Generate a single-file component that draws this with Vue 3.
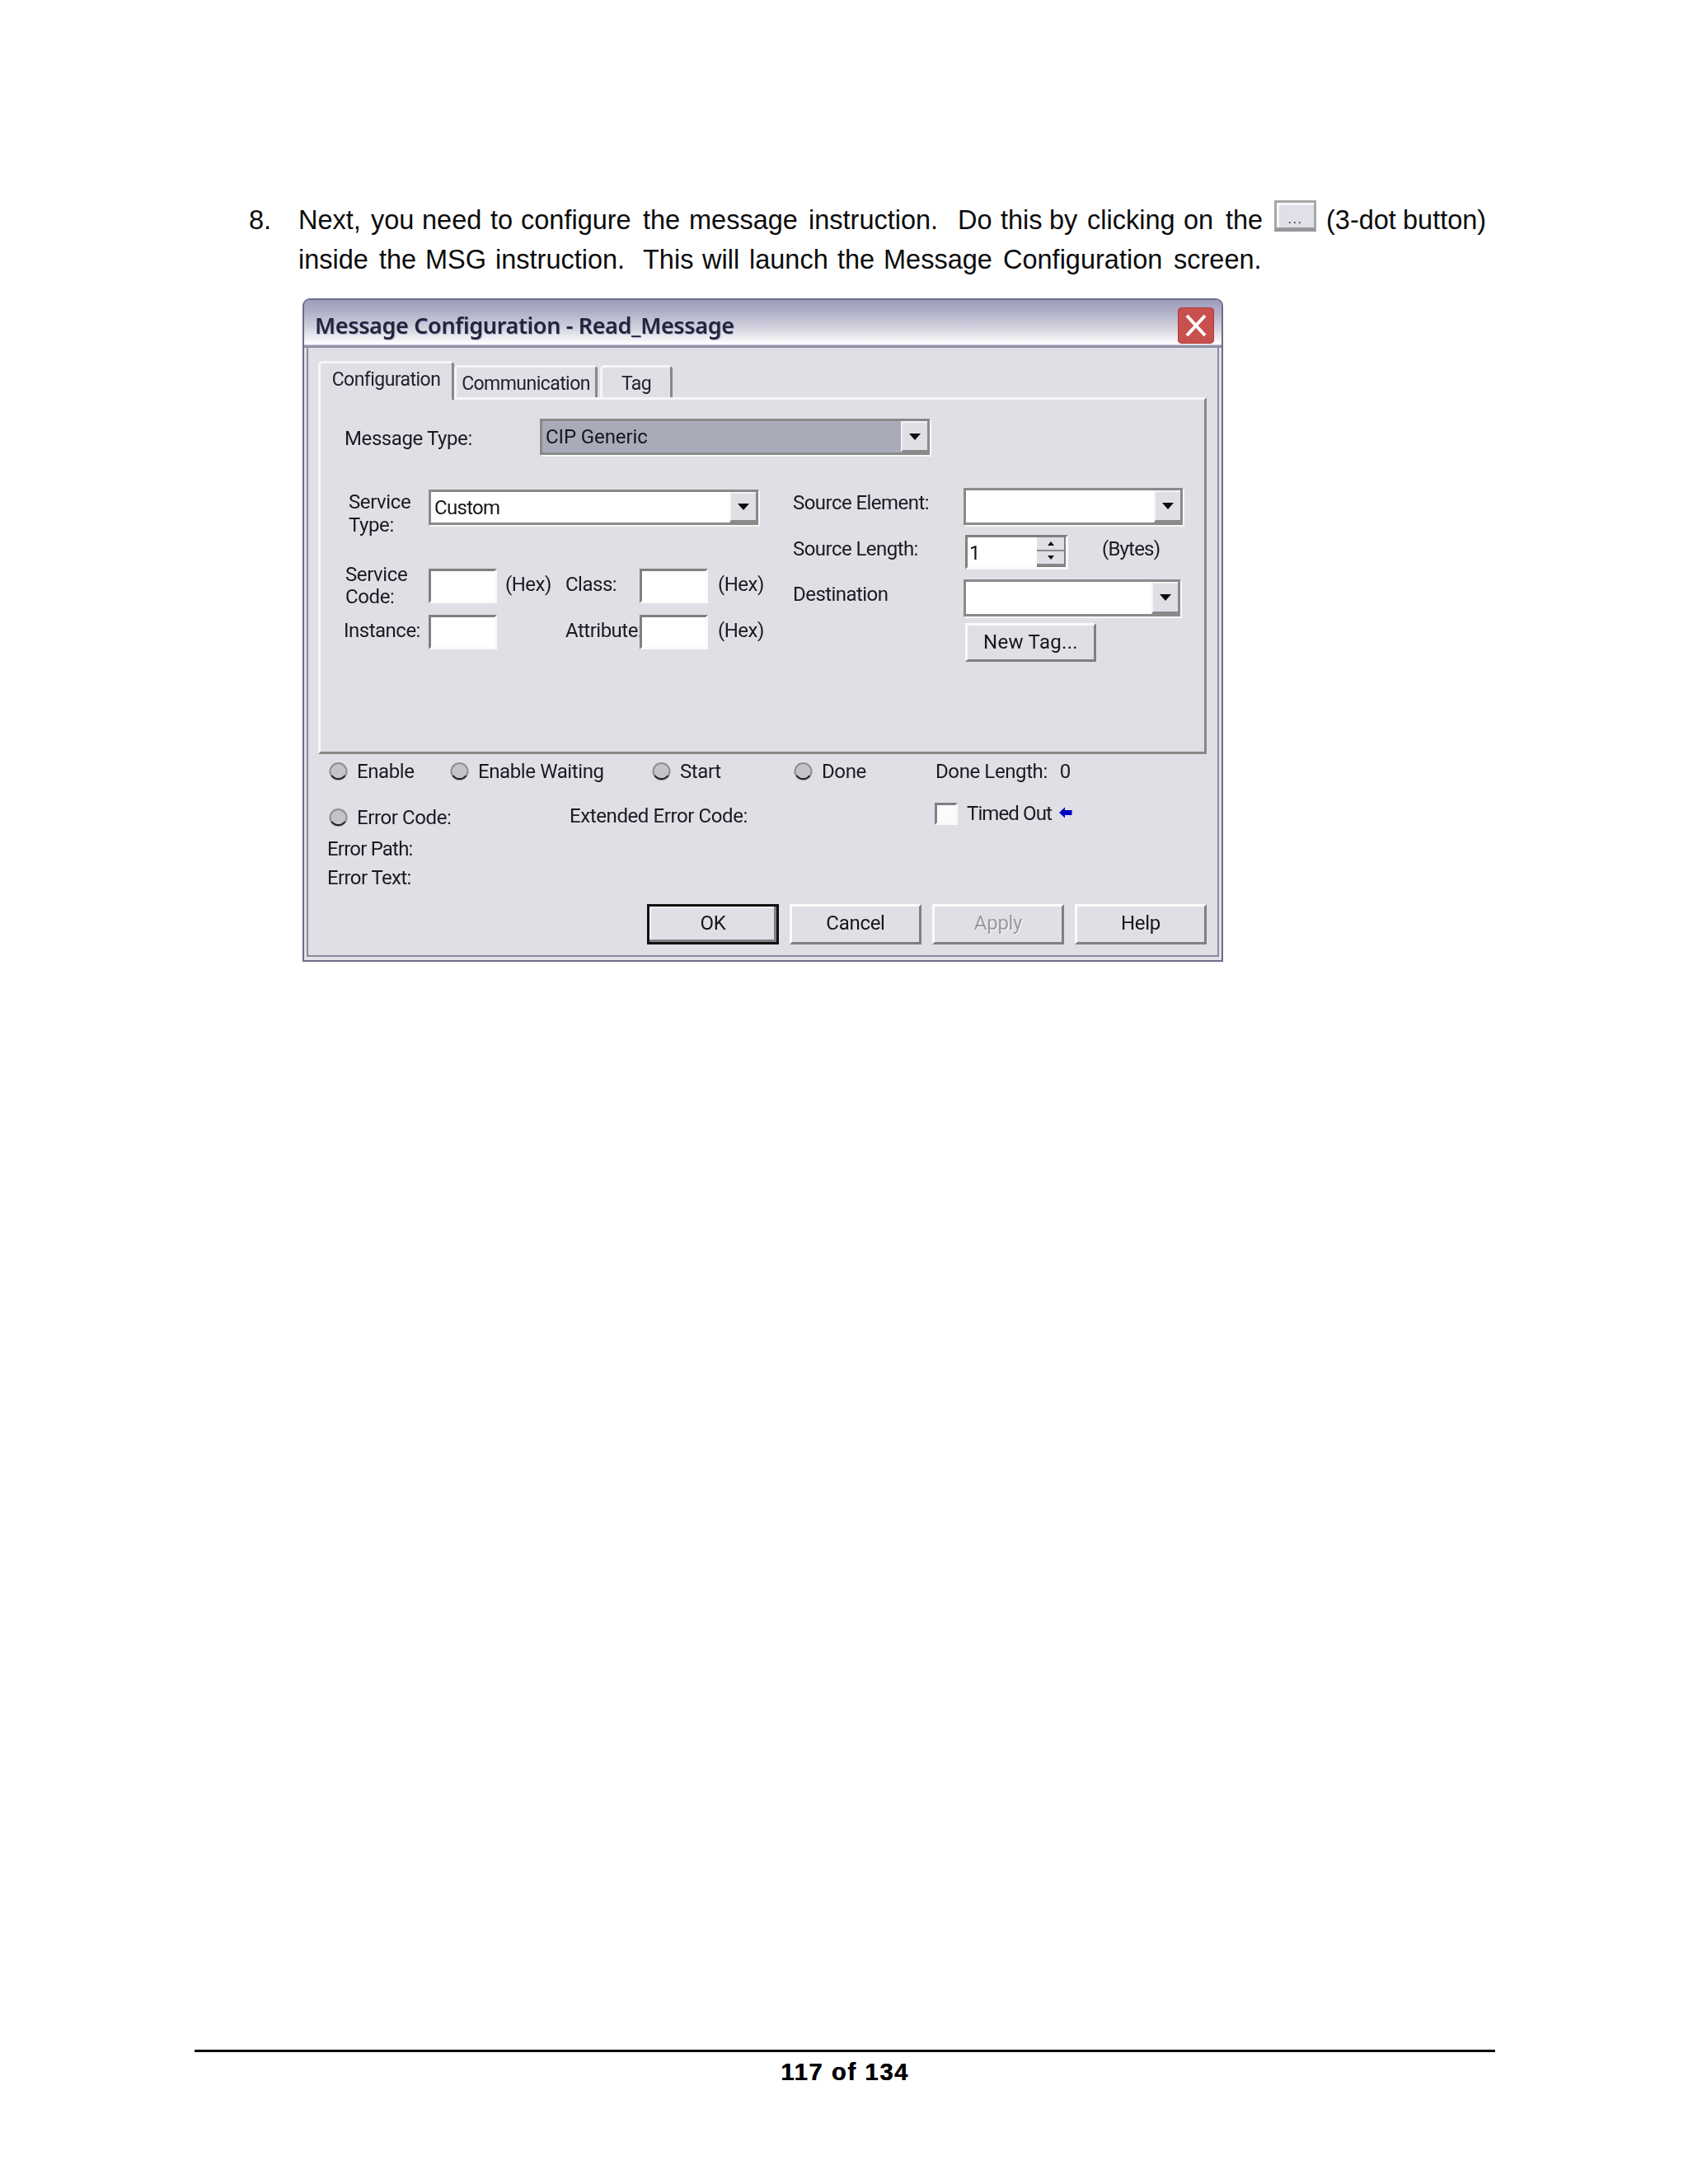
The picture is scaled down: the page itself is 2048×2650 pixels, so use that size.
<script setup>
const toSlots = (items, end) =>
  items.map((it, i) => {
    const next = i + 1 < items.length ? items[i + 1].x : end
    return { ...it, width: next - it.x }
  })
const line1 = toSlots(
  [
    { t: 'Next,', x: 361 }, { t: 'you', x: 449 }, { t: 'need', x: 511 }, { t: 'to', x: 594 },
    { t: 'configure', x: 631 }, { t: 'the', x: 779 }, { t: 'message', x: 835 }, { t: 'instruction.', x: 980 },
    { t: 'Do', x: 1161 }, { t: 'this', x: 1213 }, { t: 'by', x: 1272 }, { t: 'clicking', x: 1318 },
    { t: 'on', x: 1435 }, { t: 'the', x: 1486 }, { btn: true, x: 1545 }, { t: '(3-dot', x: 1608 }, { t: 'button)', x: 1701 },
  ],
  1810,
)
const line2 = toSlots(
  [
    { t: 'inside', x: 361 }, { t: 'the', x: 459 }, { t: 'MSG', x: 515 }, { t: 'instruction.', x: 600 },
    { t: 'This', x: 779 }, { t: 'will', x: 851 }, { t: 'launch', x: 908 }, { t: 'the', x: 1015 },
    { t: 'Message', x: 1071 }, { t: 'Configuration', x: 1216 }, { t: 'screen.', x: 1423 },
  ],
  1540,
)
const statusRow = [
  { label: 'Enable' },
  { label: 'Enable Waiting' },
  { label: 'Start' },
  { label: 'Done' },
]
const buttons = [
  { label: 'OK', cls: 'default' },
  { label: 'Cancel', cls: '' },
  { label: 'Apply', cls: 'disabled' },
  { label: 'Help', cls: '' },
]
</script>

<template>
  <div class="page">
    <div class="instruction">
      <div class="num">8.</div>
      <div class="lines">
        <div class="line">
          <span v-for="w in line1" :key="w.x" class="word" :style="{ width: w.width + 'px' }">
            <span v-if="w.btn" class="dots-btn"><span class="dots">...</span></span>
            <template v-else>{{ w.t }}</template>
          </span>
        </div>
        <div class="line">
          <span v-for="w in line2" :key="w.x" class="word" :style="{ width: w.width + 'px' }">{{ w.t }}</span>
        </div>
      </div>
    </div>

    <div class="window">
      <div class="titlebar">
        <span class="title">Message Configuration - Read_Message</span>
        <span class="close">
          <svg width="44" height="44" viewBox="0 0 44 44"><path d="M11 10 L33 34 M33 10 L11 34" stroke="#fff" stroke-width="4" fill="none" /></svg>
        </span>
      </div>
      <div class="body">
        <div class="tabs">
          <div class="tab active">Configuration</div>
          <div class="tab comm">Communication</div>
          <div class="tab tag">Tag</div>
        </div>
        <div class="panel">
          <div class="msg-row">
            <span class="lbl msg-lbl">Message Type:</span>
            <div class="combo msg-combo"><span class="val">CIP Generic</span><span class="drop"><i class="arrow"></i></span></div>
          </div>
          <div class="fields">
            <div class="left-grid">
              <div class="lbl two-line service">Service<br />Type:</div>
              <div class="combo svc-combo"><span class="val">Custom</span><span class="drop"><i class="arrow"></i></span></div>

              <div class="lbl two-line code">Service<br />Code:</div>
              <div class="input"></div>
              <div class="lbl up">(Hex)</div>
              <div class="lbl up">Class:</div>
              <div class="input"></div>
              <div class="lbl up">(Hex)</div>

              <div class="lbl up">Instance:</div>
              <div class="input"></div>
              <div></div>
              <div class="lbl up">Attribute:</div>
              <div class="input"></div>
              <div class="lbl up">(Hex)</div>
            </div>
            <div class="right-col">
              <div class="r-row r1">
                <span class="lbl r-lbl">Source Element:</span>
                <div class="combo src-combo"><span class="val"></span><span class="drop"><i class="arrow"></i></span></div>
              </div>
              <div class="r-row r2">
                <span class="lbl r-lbl">Source Length:</span>
                <div class="spin">
                  <span class="spin-val">1</span>
                  <span class="spin-btns">
                    <span class="spin-b"><i class="tri up-tri"></i></span>
                    <span class="spin-b"><i class="tri down-tri"></i></span>
                  </span>
                </div>
                <span class="lbl r-lbl bytes">(Bytes)</span>
              </div>
              <div class="r-row r3">
                <span class="lbl r-lbl">Destination</span>
                <div class="combo dst-combo"><span class="val"></span><span class="drop"><i class="arrow"></i></span></div>
              </div>
              <div class="r-row r4">
                <span class="r-lbl"></span>
                <div class="btn newtag">New Tag...</div>
              </div>
            </div>
          </div>
        </div>

        <div class="status1">
          <div v-for="s in statusRow" :key="s.label" class="radio-item">
            <svg class="radio" width="23" height="24" viewBox="0 0 23 24">
              <circle cx="11.5" cy="12" r="10" fill="#c4c4c8" stroke="#8e8e94" stroke-width="2" />
              <path d="M3.5 17 A10 10 0 0 0 19.5 17" fill="none" stroke="#222" stroke-width="2" />
            </svg>
            <span class="lbl">{{ s.label }}</span>
          </div>
          <div class="lbl done-len">Done Length:<span class="zero">0</span></div>
        </div>

        <div class="status2">
          <div class="radio-item err">
            <svg class="radio" width="23" height="24" viewBox="0 0 23 24">
              <circle cx="11.5" cy="12" r="10" fill="#c4c4c8" stroke="#8e8e94" stroke-width="2" />
              <path d="M3.5 17 A10 10 0 0 0 19.5 17" fill="none" stroke="#222" stroke-width="2" />
            </svg>
            <span class="lbl">Error Code:</span>
          </div>
          <div class="lbl ext">Extended Error Code:</div>
          <div class="timed">
            <span class="check"></span>
            <span class="lbl timed-lbl">Timed Out</span>
            <svg class="back" width="16" height="14" viewBox="0 0 16 14"><path d="M0 7 L7 0.5 L7 4 L15.5 4 L15.5 10 L7 10 L7 13.5 Z" fill="#0000c0" /></svg>
          </div>
        </div>

        <div class="lbl err-path">Error Path:</div>
        <div class="lbl err-text">Error Text:</div>

        <div class="actions">
          <div v-for="b in buttons" :key="b.label" class="btn action" :class="b.cls">{{ b.label }}</div>
        </div>
      </div>
    </div>

    <div class="footer">
      <div class="rule"></div>
      <div class="pageno">117 of 134</div>
    </div>
  </div>
</template>

<style scoped>
.page {
  width: 2048px;
  height: 2650px;
  box-sizing: border-box;
  padding-top: 243px;
  background: #fff;
  display: flex;
  flex-direction: column;
  overflow: hidden;
}
.instruction {
  margin-left: 302px;
  display: flex;
  font-family: "Liberation Sans", Arial, sans-serif;
  font-size: 32.5px;
  line-height: 48px;
  color: #0c0c0c;
}
.num { width: 60px; }
.line { display: flex; height: 48px; white-space: nowrap; }
.word { display: block; flex: none; }
.dots-btn {
  width: 51px;
  height: 38px;
  box-sizing: border-box;
  display: block;
  background: #e0e0e8;
  border: 3px solid #a8a8aa;
  border-bottom: 5px solid #98989c;
  box-shadow: inset 3px 3px 0 #f8f8fa;
  position: relative;
}
.dots {
  position: absolute;
  left: 0;
  right: 0;
  top: 11px;
  text-align: center;
  font-size: 16px;
  line-height: 18px;
  letter-spacing: 1.5px;
  color: #3a2a50;
}
.window {
  margin: 23px 0 0 367px;
  width: 1117px;
  height: 805px;
  box-sizing: border-box;
  border: 2px solid #6c6c88;
  border-radius: 9px 9px 0 0;
  background: #e2e2ec;
  filter: blur(0.35px);
}
.titlebar {
  height: 58px;
  box-sizing: border-box;
  display: flex;
  align-items: center;
  justify-content: space-between;
  padding: 0 9px 0 13px;
  background: linear-gradient(#9d9dbd 0%, #b0b0c8 25%, #d4d4e0 60%, #f6f6f8 85%, #ffffff 92%, #8e8ea6 96%, #8e8ea6 100%);
  border-radius: 7px 7px 0 0;
}
.title {
  font-family: "Noto Sans", "DejaVu Sans", sans-serif;
  font-weight: 600;
  font-size: 27px;
  color: #24243a;
  text-shadow: 1px 1px 0 rgba(130, 130, 200, 0.5);
  letter-spacing: -0.35px;
  margin-top: 2px;
}
.close {
  width: 44px;
  height: 44px;
  border-radius: 5px;
  background: #c8504f;
  box-shadow: inset 0 0 0 1px #b03a3a;
  margin-top: 4px;
  display: block;
}
.close svg { display: block; }
.body {
  margin: 0 3px 3px;
  height: 739px;
  box-sizing: border-box;
  border: 2px solid #8c8ca0;
  border-top: 0;
  padding: 16px 0 0 12px;
  background: #dfdfe5;
}
.lbl {
  font-family: Roboto, "Liberation Sans", sans-serif;
  font-size: 24px;
  line-height: 28px;
  letter-spacing: -0.4px;
  color: #1a1a22;
  white-space: nowrap;
}
.tabs {
  display: flex;
  align-items: flex-end;
  height: 44px;
  font-family: Roboto, "Liberation Sans", sans-serif;
  font-size: 23px;
  letter-spacing: -0.55px;
  color: #22222c;
  position: relative;
  z-index: 2;
}
.tab {
  height: 39px;
  box-sizing: border-box;
  border-top: 3px solid #f6f6f8;
  border-left: 3px solid #f6f6f8;
  border-right: 3px solid #888;
  border-radius: 5px 5px 0 0;
  text-align: center;
  line-height: 28px;
  padding-top: 6px;
  background: #dfdfe5;
}
.tab.active {
  width: 165px;
  height: 47px;
  margin-bottom: -3px;
  padding-top: 6px;
}
.tab.comm { width: 174px; }
.tab.tag { width: 88px; margin-left: 3px; }
.panel {
  width: 1078px;
  height: 433px;
  box-sizing: border-box;
  border: 3px solid;
  border-color: #f6f6f8 #888 #888 #f6f6f8;
  position: relative;
}
.msg-row {
  margin: 23px 0 0 29px;
  height: 44px;
  display: flex;
  align-items: center;
}
.msg-lbl { width: 237px; padding-top: 4px; }
.combo {
  box-sizing: border-box;
  display: flex;
  border: 3px solid #8a8a8a;
  background: #fff;
  box-shadow: 2px 2px 0 #f8f8f8;
}
.val {
  flex: 1;
  font-family: Roboto, "Liberation Sans", sans-serif;
  font-size: 24px;
  line-height: 39px;
  padding-left: 4px;
  color: #16161c;
}
.drop {
  width: 32px;
  box-sizing: border-box;
  background: #dfdfe5;
  border-left: 2px solid #f4f4f4;
  border-top: 2px solid #f4f4f4;
  border-bottom: 3px solid #8a8a8a;
  display: flex;
  align-items: center;
  justify-content: center;
}
.arrow {
  width: 0;
  height: 0;
  border-left: 7px solid transparent;
  border-right: 7px solid transparent;
  border-top: 8px solid #0c0c0c;
}
.msg-combo { width: 473px; height: 44px; background: #a9abb9; }
.msg-combo .val { letter-spacing: -0.1px; }
.fields {
  display: flex;
  margin: 40px 0 0 30px;
}
.left-grid {
  width: 543px;
  padding-top: 2px;
  display: grid;
  grid-template-columns: 101px 95px 73px 88px 97px 1fr;
  grid-template-rows: 43px 47px 54px 8px 41px;
  align-items: center;
}
.left-grid > :nth-child(1), .left-grid > :nth-child(2) { grid-row: 1; }
.left-grid > :nth-child(n+3):nth-child(-n+8) { grid-row: 3; }
.left-grid > :nth-child(n+9) { grid-row: 5; }
.service { padding-left: 4px; align-self: start; margin-top: 1px; }
.code { line-height: 27px; }
.svc-combo { grid-column: 2 / 7; width: 400px; height: 43px; }
.svc-combo .val { letter-spacing: -0.7px; }
.up { padding-bottom: 4px; margin-left: -2px; letter-spacing: -0.5px; }
.input {
  width: 83px;
  height: 42px;
  box-sizing: border-box;
  background: #fff;
  border: 3px solid;
  border-color: #808080 #fafafa #fafafa #808080;
}
.right-col {
  display: flex;
  flex-direction: column;
}
.r-row { display: flex; align-items: center; }
.r-lbl { width: 207px; padding-bottom: 9px; letter-spacing: -0.55px; }
.r1 { height: 45px; }
.r2 { height: 42px; margin-top: 12px; }
.r3 { height: 45px; margin-top: 12px; }
.r4 { height: 47px; margin-top: 8px; }
.src-combo { width: 266px; height: 45px; }
.dst-combo { width: 263px; height: 45px; }
.spin {
  width: 125px;
  height: 42px;
  margin-left: 2px;
  box-sizing: border-box;
  display: flex;
  background: #fff;
  border: 3px solid;
  border-color: #808080 #fafafa #fafafa #808080;
}
.spin-val {
  flex: 1;
  font-family: Roboto, "Liberation Sans", sans-serif;
  font-size: 24px;
  line-height: 38px;
  padding-left: 2px;
  color: #111;
}
.spin-btns {
  width: 33px;
  display: flex;
  flex-direction: column;
  border-right: 2px solid #808080;
  border-bottom: 2px solid #808080;
}
.spin-b {
  flex: 1;
  background: #dfdfe5;
  border-bottom: 2px solid #8a8a8a;
  display: flex;
  align-items: center;
  justify-content: center;
}
.tri { width: 0; height: 0; border-left: 4px solid transparent; border-right: 4px solid transparent; }
.up-tri { border-bottom: 5px solid #111; }
.down-tri { border-top: 5px solid #111; }
.bytes { width: auto; margin-left: 41px; letter-spacing: -0.8px; }
.btn {
  box-sizing: border-box;
  border: 3px solid;
  border-color: #fbfbfb #808080 #808080 #fbfbfb;
  background: #dfdfe5;
  font-family: Roboto, "Liberation Sans", sans-serif;
  font-size: 24px;
  letter-spacing: -0.3px;
  color: #16161c;
  display: flex;
  align-items: center;
  justify-content: center;
}
.newtag { width: 159px; height: 47px; margin-left: 2px; letter-spacing: 0.3px; padding-bottom: 2px; }
.status1 {
  margin: 7px 0 0 13px;
  display: grid;
  grid-template-columns: 147px 245px 172px 172px 1fr;
  align-items: center;
  height: 28px;
}
.radio-item { display: flex; align-items: center; gap: 11px; }
.radio { display: block; }
.done-len { display: flex; }
.zero { margin-left: 15px; }
.status2 {
  margin: 23px 0 0 13px;
  display: grid;
  grid-template-columns: 292px 443px 1fr;
  height: 32px;
  align-items: start;
}
.err { margin-top: 5px; }
.ext { margin-top: 3px; }
.timed { display: flex; align-items: center; }
.check {
  width: 28px;
  height: 27px;
  margin-top: -2px;
  box-sizing: border-box;
  background: #fbfbfb;
  border: 3px solid;
  border-color: #808080 #f8f8f8 #f8f8f8 #808080;
}
.timed-lbl { margin-left: 11px; padding-bottom: 3px; letter-spacing: -0.9px; }
.back { margin: -6px 0 0 9px; }
.err-path { margin: 11px 0 0 11px; letter-spacing: -0.8px; }
.err-text { margin: 7px 0 0 11px; letter-spacing: -0.6px; }
.actions {
  margin-top: 18px;
  width: 1078px;
  display: flex;
  justify-content: flex-end;
  gap: 13px;
}
.action { width: 160px; height: 49px; padding-bottom: 4px; }
.btn.default {
  border: 3px solid #111;
  box-shadow: inset -3px -3px 0 #808080, inset 2px 2px 0 #fbfbfb;
}
.btn.disabled {
  color: #98989e;
  text-shadow: 1px 1px 0 #fafafa;
}
.footer {
  margin: auto 0 0 236px;
  width: 1578px;
  padding-bottom: 119px;
}
.rule { height: 3px; background: #000; }
.pageno {
  margin-top: 7px;
  text-align: center;
  font-family: "Liberation Sans", Arial, sans-serif;
  font-weight: 700;
  font-size: 29px;
  line-height: 34px;
  letter-spacing: 1.7px;
  color: #000;
  text-shadow: 0.5px 0 0 #000;
}
</style>
